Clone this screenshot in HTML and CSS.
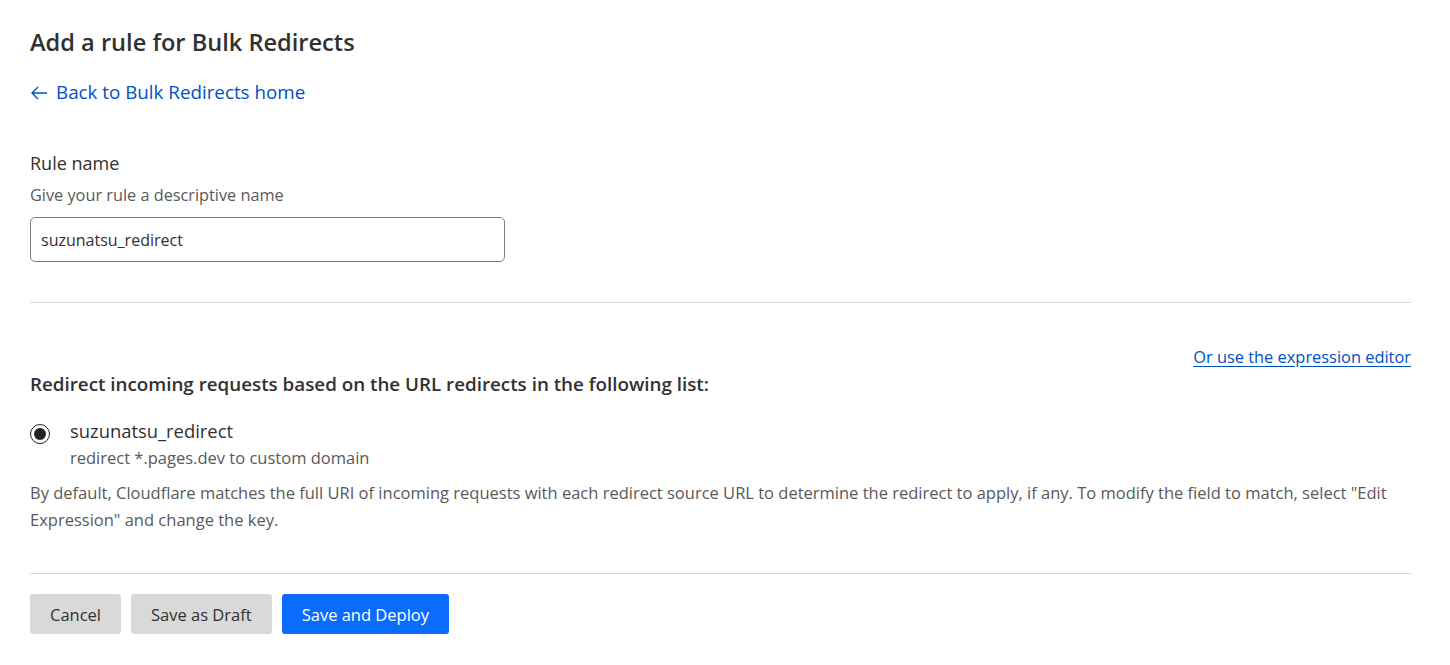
FILE: index.html
```html
<!DOCTYPE html>
<html lang="en">
<head>
    <meta charset="utf-8" />
    <title>Add a rule for Bulk Redirects</title>
    <link rel="stylesheet" href="styles.css">
</head>
<body>
    <div class="page">
        <h1 class="title">Add a rule for Bulk Redirects</h1>
        <a class="back" href="#">
            <svg class="arrow" width="18" height="14" viewBox="0 0 18 14" fill="none" stroke="currentColor" stroke-width="1.4">
                <path d="M17 7H2M8 1L2 7l6 6"/>
            </svg>
            Back to Bulk Redirects home
        </a>

        <div class="field">
            <label class="field-label" for="rulename">Rule name</label>
            <p class="field-help">Give your rule a descriptive name</p>
            <input class="text-input" type="text" id="rulename" value="suzunatsu_redirect">
        </div>

        <hr class="divider">

        <div class="editor-link-row">
            <a class="editor-link" href="#">Or use the expression editor</a>
        </div>
        <h2 class="list-heading">Redirect incoming requests based on the URL redirects in the following list:</h2>

        <label class="list-option">
            <input type="radio" name="list" checked>
            <span class="option-text">
                <span class="option-name">suzunatsu_redirect</span>
                <span class="option-desc">redirect *.pages.dev to custom domain</span>
            </span>
        </label>

        <p class="note">By default, Cloudflare matches the full URI of incoming requests with each redirect source URL to determine the redirect to apply, if any. To modify the field to match, select "Edit Expression" and change the key.</p>

        <hr class="divider bottom">

        <div class="actions">
            <button class="btn">Cancel</button>
            <button class="btn">Save as Draft</button>
            <button class="btn primary">Save and Deploy</button>
        </div>
    </div>
</body>
</html>
```

FILE: styles.css
```css
body {
    margin: 0;
    background-color: #fff;
    color: #313131;
    font-family: "Segoe UI", "Open Sans", "Noto Sans", sans-serif;
}

.page {
    padding: 24px 39px 0 30px;
}

.title {
    margin: 0;
    font-size: 23.6px;
    font-weight: 600;
    line-height: 36px;
}

.back {
    display: inline-flex;
    align-items: center;
    gap: 8px;
    margin-top: 20px;
    color: #0051c3;
    font-size: 18.8px;
    line-height: 24px;
    text-decoration: none;
}

.arrow {
    margin-top: 2px;
}

.field {
    margin-top: 46px;
}

.field-label {
    display: block;
    font-size: 18px;
    line-height: 24px;
}

.field-help {
    margin: 9px 0 0;
    color: #595959;
    font-size: 16.3px;
    line-height: 22px;
}

.text-input {
    display: block;
    box-sizing: border-box;
    width: 475px;
    height: 45px;
    margin-top: 11px;
    padding: 0 10px;
    border: 1px solid #808080;
    border-radius: 5px;
    color: #313131;
    font-family: inherit;
    font-size: 16px;
}

.divider {
    margin: 40px 0 0;
    border: none;
    border-top: 1px solid #d9d9d9;
}

.editor-link-row {
    display: flex;
    justify-content: flex-end;
    margin-top: 43px;
}

.editor-link {
    color: #0051c3;
    font-size: 16.4px;
    line-height: 22px;
    text-decoration: underline;
    text-underline-offset: 3px;
}

.list-heading {
    margin: 4px 0 0;
    font-size: 18.8px;
    font-weight: 600;
    line-height: 24px;
}

.list-option {
    display: flex;
    align-items: flex-start;
    gap: 20px;
    margin-top: 22px;
}

.list-option input {
    width: 20px;
    height: 20px;
    margin: 6px 0 0;
    accent-color: #222;
}

.option-text {
    display: flex;
    flex-direction: column;
}

.option-name {
    font-size: 18.4px;
    line-height: 26px;
}

.option-desc {
    margin-top: 3px;
    color: #595959;
    font-size: 16.5px;
    line-height: 22px;
}

.note {
    margin: 10px 0 0;
    color: #595959;
    font-size: 16.5px;
    line-height: 27px;
}

.divider.bottom {
    margin-top: 40px;
}

.actions {
    display: flex;
    gap: 10px;
    margin-top: 20px;
}

.btn {
    height: 40px;
    padding: 0 20px;
    border: none;
    border-radius: 3px;
    background-color: #d9d9d9;
    color: #313131;
    font-family: inherit;
    font-size: 16.5px;
    cursor: pointer;
}

.btn.primary {
    background-color: #0a6cff;
    color: #fff;
}
```
